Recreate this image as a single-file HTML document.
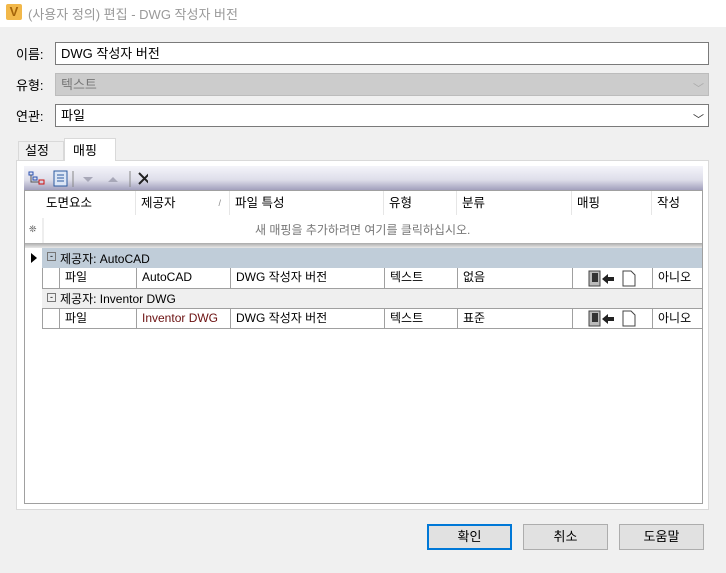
<!DOCTYPE html>
<html><head><meta charset="utf-8"><style>
*{box-sizing:border-box;margin:0;padding:0}
body{width:726px;height:573px;background:#f0f0f0;font-family:"Liberation Sans","Noto Sans CJK KR",sans-serif;font-size:12px;color:#000;position:relative;overflow:hidden}
.a{position:absolute}
.title{left:0;top:0;width:726px;height:27px;background:#fff}
.inp{background:#fff;border:1px solid #7a7a7a;padding:1px 5px;font-size:13px;line-height:19px}
.lbl{font-size:13px}
.cell{position:absolute;border-right:1px solid #a0a0a0;height:100%;padding:1px 5px;white-space:nowrap;line-height:17px}
.btn{background:#e1e1e1;border:1px solid #adadad;text-align:center;line-height:24px;font-size:13px}
</style></head><body>
<div class="a title"></div>
<div class="a" style="left:6px;top:4px;width:16px;height:16px;background:#f2b84a;border-radius:2px;color:#a5640a;font-weight:bold;font-size:13px;text-align:center;line-height:16px">V</div>
<div class="a" style="left:28px;top:4px;font-size:13px;color:#999">(사용자 정의) 편집 - DWG 작성자 버전</div>

<div class="a lbl" style="left:16px;top:44px">이름:</div>
<div class="a inp" style="left:55px;top:42px;width:654px;height:23px">DWG 작성자 버전</div>
<div class="a lbl" style="left:16px;top:75px">유형:</div>
<div class="a inp" style="left:55px;top:73px;width:654px;height:23px;background:#cccccc;border-color:#bcbcbc;color:#777">텍스트</div>
<div class="a" style="left:693px;top:80px;color:#aaa;font-size:11px">﹀</div>
<div class="a lbl" style="left:16px;top:106px">연관:</div>
<div class="a inp" style="left:55px;top:104px;width:654px;height:23px">파일</div>
<div class="a" style="left:693px;top:111px;color:#333;font-size:11px">﹀</div>

<div class="a" style="left:18px;top:141px;width:46px;height:20px;border:1px solid #d9d9d9;border-bottom:none;padding:0 6px;font-size:13px;line-height:18px">설정</div>
<div class="a" style="left:64px;top:138px;width:52px;height:23px;background:#fff;border:1px solid #d9d9d9;border-bottom:none;padding:1px 8px;font-size:13px;z-index:2">매핑</div>
<div class="a" style="left:16px;top:160px;width:693px;height:350px;background:#fff;border:1px solid #d9d9d9"></div>

<div class="a" style="left:24px;top:166px;width:679px;height:25px;background:linear-gradient(#f4f4fa,#dedeea 55%,#9c9ab8)"></div>
<svg class="a" style="left:28px;top:170px" width="120" height="18">
<rect x="1" y="2" width="4" height="3" fill="none" stroke="#2850b0"/><rect x="5" y="7" width="4" height="3" fill="none" stroke="#2850b0"/><rect x="11" y="10" width="5" height="4" fill="none" stroke="#d01010"/>
<path d="M3 5v7h8" stroke="#555" fill="none"/>
<rect x="26" y="1" width="13" height="15" fill="#dce6f6" stroke="#2c5aa0"/><path d="M29 5h7M29 8h7M29 11h7" stroke="#2c5aa0"/>
<path d="M45 1v16" stroke="#888"/>
<path d="M55 7h10l-5 5z" fill="#a8a8b8"/><path d="M80 12h10l-5-5z" fill="#a8a8b8"/>
<path d="M102 1v16" stroke="#888"/>
<path d="M111 3l11 11M122 3l-11 11" stroke="#222" stroke-width="2"/>
</svg>

<div class="a" style="left:24px;top:190px;width:679px;height:314px;background:#fff;border:1px solid #a0a0a0"></div>
<div class="a" style="left:25px;top:191px;width:677px;height:24px;font-size:12.5px">
<div class="cell" style="left:17px;width:94px;border-color:#e6e6e6;padding-left:4px;line-height:22px">도면요소</div>
<div class="cell" style="left:111px;width:94px;border-color:#e6e6e6;line-height:22px">제공자<span style="position:absolute;right:8px;color:#888;font-size:9px">/</span></div>
<div class="cell" style="left:205px;width:154px;border-color:#e6e6e6;line-height:22px">파일 특성</div>
<div class="cell" style="left:359px;width:73px;border-color:#e6e6e6;line-height:22px">유형</div>
<div class="cell" style="left:432px;width:115px;border-color:#e6e6e6;line-height:22px">분류</div>
<div class="cell" style="left:547px;width:80px;border-color:#e6e6e6;line-height:22px">매핑</div>
<div class="cell" style="left:627px;width:50px;border:none;line-height:22px">작성</div>
</div>
<div class="a" style="left:29px;top:224px;font-size:9px;color:#444">❊</div>
<div class="a" style="left:42px;top:218px;width:2px;height:26px;background:#eee"></div>
<div class="a" style="left:255px;top:221px;color:#777">새 매핑을 추가하려면 여기를 클릭하십시오.</div>
<div class="a" style="left:25px;top:243px;width:677px;height:5px;background:linear-gradient(#aaa,#e8e8e8)"></div>

<div class="a" style="left:42px;top:248px;width:660px;height:20px;background:#c0cdd9"></div>
<div class="a" style="left:31px;top:253px;width:0;height:0;border-left:6px solid #000;border-top:5px solid transparent;border-bottom:5px solid transparent"></div>
<div class="a" style="left:47px;top:252px;width:9px;height:9px;border:1px solid #777;font-size:9px;line-height:6px;text-align:center">-</div>
<div class="a" style="left:60px;top:250px">제공자: AutoCAD</div>
<div class="a" style="left:42px;top:268px;width:660px;height:21px;border-bottom:1px solid #a0a0a0;border-left:1px solid #a0a0a0">
<div class="cell" style="left:16px;width:78px;border-left:1px solid #a0a0a0">파일</div>
<div class="cell" style="left:94px;width:94px">AutoCAD</div>
<div class="cell" style="left:188px;width:154px">DWG 작성자 버전</div>
<div class="cell" style="left:342px;width:73px">텍스트</div>
<div class="cell" style="left:415px;width:115px">없음</div>
<div class="cell" style="left:530px;width:80px"></div>
<div class="cell" style="left:610px;width:50px;border:none">아니오</div>
</div>
<div class="a" style="left:42px;top:289px;width:660px;height:19px;background:#efefef"></div>
<div class="a" style="left:47px;top:293px;width:9px;height:9px;border:1px solid #777;font-size:9px;line-height:6px;text-align:center">-</div>
<div class="a" style="left:60px;top:290px">제공자: Inventor DWG</div>
<div class="a" style="left:42px;top:308px;width:660px;height:21px;border-bottom:1px solid #a0a0a0;border-left:1px solid #a0a0a0;border-top:1px solid #a0a0a0">
<div class="cell" style="left:16px;width:78px;border-left:1px solid #a0a0a0">파일</div>
<div class="cell" style="left:94px;width:94px;color:#6b1010">Inventor DWG</div>
<div class="cell" style="left:188px;width:154px">DWG 작성자 버전</div>
<div class="cell" style="left:342px;width:73px">텍스트</div>
<div class="cell" style="left:415px;width:115px">표준</div>
<div class="cell" style="left:530px;width:80px"></div>
<div class="cell" style="left:610px;width:50px;border:none">아니오</div>
</div>
<svg class="a" style="left:588px;top:270px" width="50" height="60">
<g id="m"><rect x="1" y="1" width="11" height="15" fill="#bbb" stroke="#444"/><rect x="4" y="3" width="6" height="9" fill="#333"/>
<path d="M14 9l6-5v3h6v4h-6v3z" fill="#222"/>
<path d="M35 1h8l4 4v11h-12z" fill="#fff" stroke="#444"/></g>
<use href="#m" y="40"/></svg>

<div class="a btn" style="left:427px;top:524px;width:85px;height:26px;border:2px solid #0078d7;line-height:22px">확인</div>
<div class="a btn" style="left:523px;top:524px;width:85px;height:26px">취소</div>
<div class="a btn" style="left:619px;top:524px;width:85px;height:26px">도움말</div>
</body></html>
